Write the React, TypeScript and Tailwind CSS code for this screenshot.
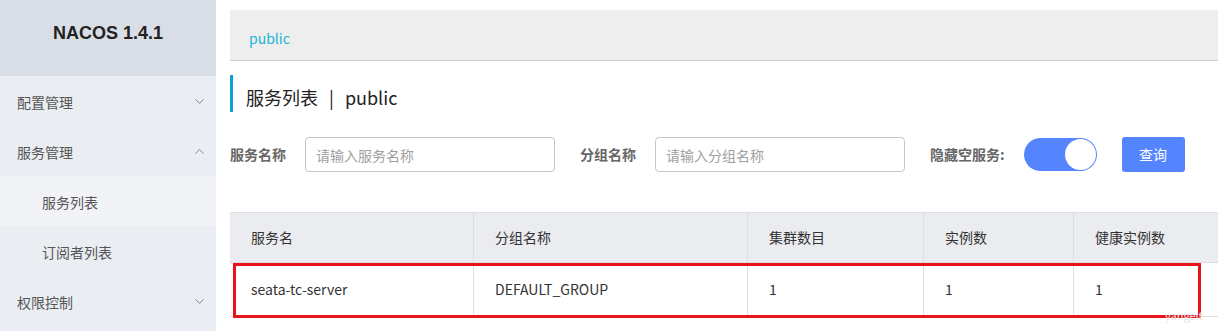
import { ChevronDown, ChevronUp } from 'lucide-react'

const FONT = { fontFamily: '"Noto Sans CJK SC", "Noto Sans", sans-serif' }

const COLS = [
  { title: '服务名', w: 'w-[243px]', value: 'seata-tc-server' },
  { title: '分组名称', w: 'w-[274px]', value: 'DEFAULT_GROUP' },
  { title: '集群数目', w: 'w-[176px]', value: '1' },
  { title: '实例数', w: 'w-[150px]', value: '1' },
  { title: '健康实例数', w: 'w-[170px]', value: '1' },
]

function MenuItem({ label, open, sub = false, active = false }: { label: string; open?: boolean; sub?: boolean; active?: boolean }) {
  return (
    <div
      className={[
        'h-[50px] flex items-center justify-between pr-[9px] text-[14px] text-[#555]',
        sub ? 'pl-[42px]' : 'pl-[17px]',
        active ? 'bg-[#f2f3f7]' : '',
      ].join(' ')}
    >
      <span className="pt-[3px]">{label}</span>
      {open === true && <ChevronUp size={15} strokeWidth={1.4} className="text-[#6f7b90]" />}
      {open === false && <ChevronDown size={15} strokeWidth={1.4} className="text-[#6f7b90]" />}
    </div>
  )
}

function Sidebar() {
  return (
    <div className="w-[216px] shrink-0 bg-[#eaedf1] h-full">
      <div className="h-[76px] bg-[#d9dde5] flex items-center justify-center pb-[10px]">
        <span className="text-[18px] font-bold text-[#222]" style={{ fontFamily: '"Liberation Sans", Arial, sans-serif' }}>
          NACOS 1.4.1
        </span>
      </div>
      <MenuItem label="配置管理" open={false} />
      <MenuItem label="服务管理" open={true} />
      <MenuItem label="服务列表" sub active />
      <MenuItem label="订阅者列表" sub />
      <MenuItem label="权限控制" open={false} />
    </div>
  )
}

export default function App() {
  return (
    <div className="flex w-[1218px] h-[331px] bg-white overflow-hidden" style={FONT}>
      <Sidebar />
      <div className="flex-1 min-w-0 pl-[14px] pt-[10px] overflow-hidden">
        {/* namespace bar */}
        <div className="h-[51px] bg-[#eeeeee] border-b border-[#cccccc] pl-[19px] pt-[15px]">
          <span className="text-[14px] leading-[20px] text-[#1cb4d8]">public</span>
        </div>

        {/* title */}
        <div className="mt-[14px] h-[37px] border-l-[3px] border-[#0d9fd8] pl-[13px] pt-[9px] flex items-start text-[18px] leading-[26px] text-[#222]">
          <span>服务列表</span>
          <span className="ml-[11px] mr-[11px]">|</span>
          <span>public</span>
        </div>

        {/* filters */}
        <div className="mt-[25px] h-[35px] flex items-center text-[14px]">
          <span className="font-bold text-[#666]">服务名称</span>
          <input
            className="ml-[19px] w-[250px] h-[35px] border border-[#c4c6cf] rounded-[4px] px-[10px] text-[14px] placeholder:text-[#a0a0a0] outline-none"
            placeholder="请输入服务名称"
          />
          <span className="ml-[25px] font-bold text-[#666]">分组名称</span>
          <input
            className="ml-[19px] w-[250px] h-[35px] border border-[#c4c6cf] rounded-[4px] px-[10px] text-[14px] placeholder:text-[#a0a0a0] outline-none"
            placeholder="请输入分组名称"
          />
          <span className="ml-[25px] font-bold text-[#666]">隐藏空服务:</span>
          <div className="ml-[19px] w-[73px] h-[33px] rounded-full bg-[#5584ff] flex items-center justify-end pr-[1px]">
            <div className="w-[31px] h-[31px] rounded-full bg-white" />
          </div>
          <button className="ml-[25px] w-[63px] h-[35px] rounded-[3px] bg-[#5584ff] text-white text-[14px]">查询</button>
        </div>

        {/* table */}
        <div className="relative mt-[40px] w-[1013px]">
          <div className="flex h-[51px] bg-[#ebecf0] border-t border-[#dcdee3] border-b">
            {COLS.map((c, i) => (
              <div
                key={c.title}
                className={[c.w, 'shrink-0 flex items-center pl-[21px] text-[14px] text-[#333]', i > 0 ? 'border-l border-[#dcdee3]' : ''].join(' ')}
              >
                {c.title}
              </div>
            ))}
          </div>
          <div className="flex h-[54px] bg-white border-b border-[#dcdee3]">
            {COLS.map((c, i) => (
              <div
                key={c.title}
                className={[c.w, 'shrink-0 flex items-center pl-[21px] text-[14px] text-[#333]', i > 0 ? 'border-l border-[#dcdee3]' : ''].join(' ')}
              >
                {c.value}
              </div>
            ))}
          </div>

          {/* annotation box */}
          <div className="absolute left-[3px] top-[51px] w-[968px] h-[55px] border-[3px] border-[#e8131b]" />
          <span className="absolute left-[935px] top-[97px] text-[11px] leading-[12px] text-[#e4e4e4]">yangeit</span>
        </div>
      </div>
    </div>
  )
}
